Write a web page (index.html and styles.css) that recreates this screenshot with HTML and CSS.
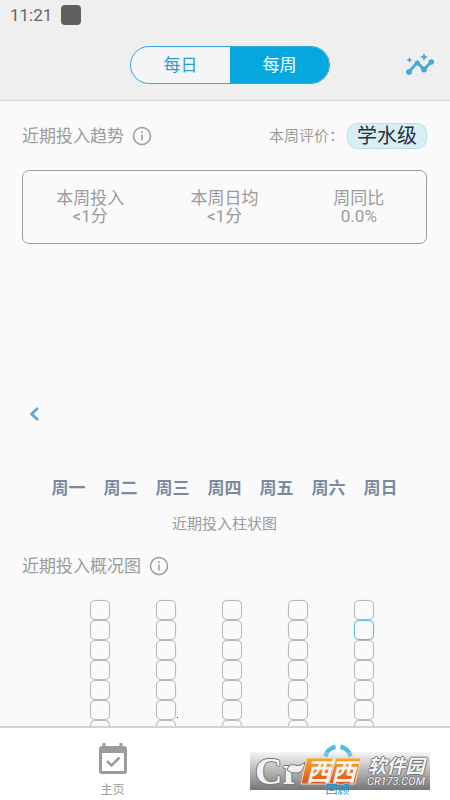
FILE: index.html
```html
<!DOCTYPE html>
<html lang="zh-CN">
<head>
<meta charset="utf-8">
<meta name="viewport" content="width=device-width, initial-scale=1">
<title>回顾</title>
<link rel="stylesheet" href="styles.css">
</head>
<body>
<header class="top">
  <div class="status"><span>11:21</span><i class="status-app"></i></div>
  <div class="toolbar">
    <div class="segment">
      <button type="button" class="segment-item">每日</button>
      <button type="button" class="segment-item active" aria-pressed="true">每周</button>
    </div>
    <button type="button" class="insights" aria-label="趋势">
      <svg width="30" height="24" viewBox="0 0 30 24">
        <path d="M4 19 12 9.500 19 16.500 26 9" fill="none" stroke="currentColor" stroke-width="2.800"/>
        <g fill="currentColor">
          <circle cx="4" cy="19" r="2.900"/><circle cx="12.300" cy="10" r="2.600"/><circle cx="19" cy="16.500" r="2.900"/><circle cx="26.300" cy="9" r="2.800"/>
          <path d="M19 0 20.200 2.800 23 4 20.200 5.200 19 8 17.800 5.200 15 4 17.800 2.800z"/>
          <path d="M4.500 4 5.400 6.100 7.500 7 5.400 7.900 4.500 10 3.600 7.900 1.500 7 3.600 6.100z"/>
        </g>
      </svg>
    </button>
  </div>
</header>

<main class="content">
  <div class="section-head">
    <h2 class="title">近期投入趋势</h2>
    <button type="button" class="info" aria-label="说明">
      <svg width="20" height="20" viewBox="0 0 20 20"><circle cx="10" cy="10" r="8.500" fill="none" stroke="currentColor" stroke-width="1.500"/><path d="M10 8.500v6M10 5.300v1.700" stroke="currentColor" stroke-width="1.500"/></svg>
    </button>
    <span class="rating-label">本周评价：</span>
    <span class="rating">学水级</span>
  </div>

  <dl class="stats">
    <div class="stat"><dt>本周投入</dt><dd>&lt;1分</dd></div>
    <div class="stat"><dt>本周日均</dt><dd>&lt;1分</dd></div>
    <div class="stat"><dt>周同比</dt><dd>0.0%</dd></div>
  </dl>

  <figure class="chart">
    <div class="plot">
      <button type="button" class="prev" aria-label="上一周">
        <svg width="12" height="16" viewBox="0 0 12 16"><path d="M10 2 3.500 8l6.500 6" fill="none" stroke="currentColor" stroke-width="2.500"/></svg>
      </button>
    </div>
    <div class="weekdays"><span>周一</span><span>周二</span><span>周三</span><span>周四</span><span>周五</span><span>周六</span><span>周日</span></div>
    <figcaption>近期投入柱状图</figcaption>
  </figure>

  <div class="section-head overview-head">
    <h2 class="title">近期投入概况图</h2>
    <button type="button" class="info" aria-label="说明">
      <svg width="20" height="20" viewBox="0 0 20 20"><circle cx="10" cy="10" r="8.500" fill="none" stroke="currentColor" stroke-width="1.500"/><path d="M10 8.500v6M10 5.300v1.700" stroke="currentColor" stroke-width="1.500"/></svg>
    </button>
  </div>
  <div class="overview">
    <div class="week"><i></i><i></i><i></i><i></i><i></i><i></i><i></i></div>
    <div class="week"><i></i><i></i><i></i><i></i><i></i><i class="dot"></i><i></i></div>
    <div class="week"><i></i><i></i><i></i><i></i><i></i><i></i><i></i></div>
    <div class="week"><i></i><i></i><i></i><i></i><i></i><i></i><i></i></div>
    <div class="week"><i></i><i class="today"></i><i></i><i></i><i></i><i></i><i></i></div>
  </div>
</main>

<nav class="tabs">
  <a href="#" class="tab">
    <svg width="32" height="34" viewBox="0 0 32 34"><path d="M7 0v5M24 0v5" stroke="currentColor" stroke-width="3"/><path fill="currentColor" fill-rule="evenodd" d="M5 3h22a3 3 0 0 1 3 3v22a3 3 0 0 1-3 3H5a3 3 0 0 1-3-3V6a3 3 0 0 1 3-3zM5 10v18h22V10z"/><path d="M10 18l4.500 4.500 8-8" fill="none" stroke="currentColor" stroke-width="2.500"/></svg>
    <span>主页</span>
  </a>
  <a href="#" class="tab current" aria-current="page">
    <svg width="32" height="34" viewBox="0 0 32 34"><g fill="none" stroke="#4bbde2" stroke-width="4.500"><path d="M3.500 13.500A12.500 12.500 0 0 1 13.500 3.800"/><path d="M18.500 3.800A12.500 12.500 0 0 1 28.500 13.500"/><path d="M28.500 19A12.500 12.500 0 0 1 3.500 19"/></g></svg>
    <span>回顾</span>
  </a>
  <div class="banner">
    <span class="banner-cr">Cr</span>
    <svg class="banner-leaf" width="20" height="14" viewBox="0 0 20 14"><path d="M1 9Q3 2 9 4 14 6 19 1 18 10 12 12 6 13 1 9z" fill="#eee" stroke="#777"/></svg>
    <span class="banner-tiles">
      <svg width="62" height="28" viewBox="0 0 62 28"><defs><linearGradient id="tile" x2="0" y2="1"><stop stop-color="#f6a92c"/><stop offset="1" stop-color="#df501b"/></linearGradient></defs><path d="M7 1h26l-6 26H1zM36 1h25l-6 26H29z" fill="url(#tile)" stroke="#f3d9bd"/></svg>
      <b>西西</b>
    </span>
    <span class="banner-name"><b>软件园</b><em>CR173.COM</em></span>
  </div>
</nav>
</body>
</html>
```

FILE: styles.css
```css
* { box-sizing: border-box; }

body {
  margin: 0;
  height: 100vh;
  display: flex;
  flex-direction: column;
  overflow: hidden;
  background: #fafafa;
  color: #9b9b9b;
  font-family: Roboto, "Noto Sans CJK SC", sans-serif;
  font-size: 17px;
  line-height: 18px;
}

button {
  padding: 0;
  border: 0;
  background: none;
  color: inherit;
  font: inherit;
}

svg { display: block; }
h2, dl, dd, figure { margin: 0; }

.top {
  flex: none;
  background: #efefef;
  border-bottom: 1px solid #d9d9d9;
}

.status {
  display: flex;
  align-items: center;
  gap: 9px;
  padding: 5px 10px 0;
  color: #666;
}

.status-app {
  width: 20px;
  height: 20px;
  border-radius: 4px;
  background: #606060;
}

.toolbar {
  display: grid;
  grid-template-columns: 1fr 200px 1fr;
  align-items: center;
  padding: 21px 15px 16px 25px;
}

.segment {
  grid-column: 2;
  display: flex;
  height: 38px;
  border: 1px solid #35a9d8;
  border-radius: 19px;
  overflow: hidden;
  background: #f3f5f6;
  color: #279fd0;
}

.segment-item { flex: 1; }
.segment-item.active { background: #06a7df; color: #fff; }
.insights { justify-self: end; color: #45a9d2; }

.content {
  flex: 1;
  min-height: 0;
  overflow: hidden;
  padding: 21px 23px 0 22px;
}

.section-head {
  display: flex;
  align-items: center;
  height: 27px;
}

.title { font-size: 17px; font-weight: 400; }
.info { margin-left: 8px; }

.rating-label {
  margin-left: auto;
  font-size: 15px;
}

.rating {
  margin-left: 3px;
  padding: 0 9px;
  border: 1px solid #b5dfeb;
  border-radius: 10px;
  background: #d8eef5;
  color: #263238;
  font-size: 20px;
  line-height: 24px;
}

.stats {
  display: grid;
  grid-template-columns: repeat(3, 1fr);
  margin-top: 21px;
  padding: 18px 0;
  border: 1px solid #9c9c9c;
  border-radius: 7px;
  text-align: center;
}

.plot {
  display: flex;
  align-items: flex-end;
  height: 178px;
  padding-left: 6px;
}

.prev { color: #56a5dd; }

.weekdays {
  display: grid;
  grid-template-columns: repeat(7, 52px);
  justify-content: center;
  margin-top: 57px;
  color: #7a8ba0;
  font-weight: 700;
  text-align: center;
}

figcaption {
  margin-top: 18px;
  font-size: 15px;
  text-align: center;
}

.overview-head { margin-top: 19px; }

.overview {
  display: flex;
  justify-content: center;
  gap: 46px;
  padding: 21px 0 0 15px;
}

.week i {
  display: block;
  position: relative;
  width: 20px;
  height: 20px;
  border: 1px solid #b8b8b8;
  border-radius: 5px;
  box-shadow: 0 0 1px #c4c4c4;
}

.week .today { border-color: #5dbbe0; box-shadow: 0 0 1px #5dbbe0; }

.week .dot::after {
  content: "";
  position: absolute;
  right: -3px;
  bottom: 1px;
  width: 1px;
  height: 1px;
  background: #222;
}

.tabs {
  flex: none;
  position: relative;
  display: grid;
  grid-template-columns: 1fr 1fr;
  height: 74px;
  padding-top: 15px;
  border-top: 2px solid #d3d3d3;
  background: #fff;
}

.tab {
  display: flex;
  flex-direction: column;
  align-items: center;
  gap: 4px;
  color: #9b9b9b;
  font-size: 12px;
  text-decoration: none;
}

.current span {
  position: relative;
  z-index: 2;
  color: #1c9bc9;
}

.banner {
  position: absolute;
  right: 20px;
  bottom: 10px;
  display: flex;
  align-items: center;
  width: 180px;
  height: 38px;
  background: linear-gradient(rgba(224, 224, 224, 0.3), rgba(110, 110, 110, 0.95));
  color: #f4f4f4;
}

.banner-cr {
  width: 50px;
  padding-left: 5px;
  font: 700 38px/38px "Liberation Serif", serif;
  text-shadow: 1px 0 #777, -1px 0 #777, 0 1px #777, 0 -1px #777;
}

.banner-leaf {
  position: absolute;
  left: 36px;
  top: 9px;
}

.banner-tiles { position: relative; }

.banner-tiles b {
  position: absolute;
  inset: 0;
  font: italic 700 25px/26px "Noto Sans CJK SC", sans-serif;
  text-align: center;
}

.banner-name {
  display: flex;
  flex-direction: column;
  align-items: center;
  flex: 1;
  text-shadow: 1px 0 #777, -1px 0 #777, 0 1px #777, 0 -1px #777;
}

.banner-name b {
  font: italic 700 19px/20px "Noto Sans CJK SC", sans-serif;
}

.banner-name em {
  font: italic 11px/13px Roboto, sans-serif;
}
```
